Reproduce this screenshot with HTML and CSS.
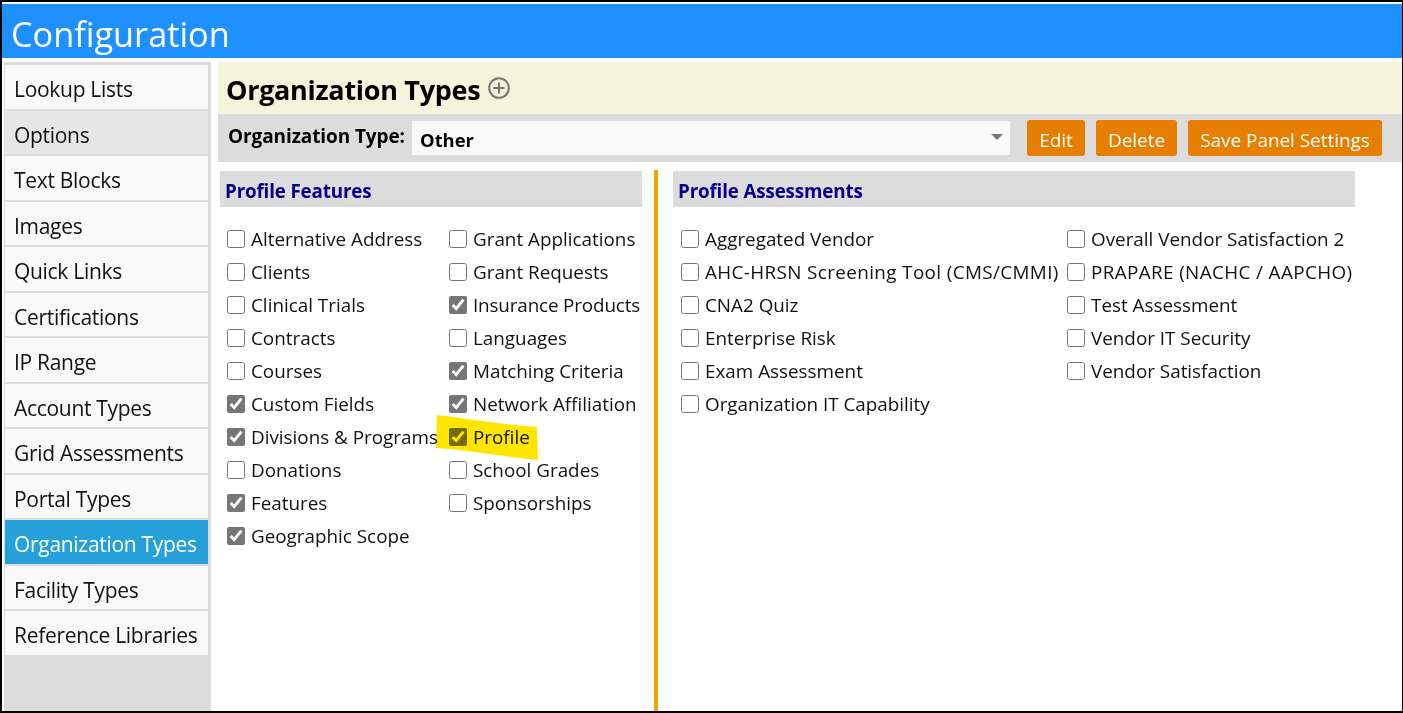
FILE: index.html
```html
<!DOCTYPE html>
<html lang="en">

<head>
  <meta charset="UTF-8" />
  <title>Configuration</title>
  <link rel="stylesheet" href="styles.css">
</head>

<body>
  <div class="frame">
    <div class="page-title">Configuration</div>

    <div class="content">
      <div class="sidebar">
        <a class="nav-item">Lookup Lists</a>
        <a class="nav-item nav-hover">Options</a>
        <a class="nav-item">Text Blocks</a>
        <a class="nav-item">Images</a>
        <a class="nav-item">Quick Links</a>
        <a class="nav-item">Certifications</a>
        <a class="nav-item">IP Range</a>
        <a class="nav-item">Account Types</a>
        <a class="nav-item">Grid Assessments</a>
        <a class="nav-item">Portal Types</a>
        <a class="nav-item nav-active">Organization Types</a>
        <a class="nav-item">Facility Types</a>
        <a class="nav-item">Reference Libraries</a>
      </div>

      <div class="main">
        <div class="title-bar">
          <h1>Organization Types</h1>
          <svg class="add-icon" viewBox="0 0 22 22" width="22" height="22">
            <circle cx="11" cy="11" r="9.8" fill="none" stroke="#777" stroke-width="2" />
            <path d="M11 5.5v11M5.5 11h11" fill="none" stroke="#777" stroke-width="2" />
          </svg>
        </div>

        <div class="toolbar">
          <label class="type-label">Organization Type:</label>
          <div class="type-select">
            <span>Other</span>
            <i class="caret"></i>
          </div>
          <button class="btn btn-edit">Edit</button>
          <button class="btn btn-delete">Delete</button>
          <button class="btn btn-save">Save Panel Settings</button>
        </div>

        <div class="panels">
          <div class="panel panel-features">
            <h2>Profile Features</h2>
            <div class="checks checks-features">
              <label class="check"><input type="checkbox">Alternative Address</label>
              <label class="check"><input type="checkbox">Clients</label>
              <label class="check"><input type="checkbox">Clinical Trials</label>
              <label class="check"><input type="checkbox">Contracts</label>
              <label class="check"><input type="checkbox">Courses</label>
              <label class="check"><input type="checkbox" checked>Custom Fields</label>
              <label class="check"><input type="checkbox" checked>Divisions &amp; Programs</label>
              <label class="check"><input type="checkbox">Donations</label>
              <label class="check"><input type="checkbox" checked>Features</label>
              <label class="check"><input type="checkbox" checked>Geographic Scope</label>
              <label class="check"><input type="checkbox">Grant Applications</label>
              <label class="check"><input type="checkbox">Grant Requests</label>
              <label class="check check-tight"><input type="checkbox" checked>Insurance Products</label>
              <label class="check"><input type="checkbox">Languages</label>
              <label class="check"><input type="checkbox" checked>Matching Criteria</label>
              <label class="check"><input type="checkbox" checked>Network Affiliation</label>
              <label class="check check-marked"><input type="checkbox" checked>Profile
                <svg class="marker" viewBox="0 0 104 46" width="104" height="46" preserveAspectRatio="none">
                  <path d="M2 1C30 4 60 10 102 13L103 46C70 43 35 36 1 34Z" fill="#ffe600" />
                </svg>
              </label>
              <label class="check"><input type="checkbox">School Grades</label>
              <label class="check"><input type="checkbox">Sponsorships</label>
            </div>
          </div>

          <div class="panel panel-assessments">
            <h2>Profile Assessments</h2>
            <div class="checks checks-assessments">
              <label class="check"><input type="checkbox">Aggregated Vendor</label>
              <label class="check check-wide"><input type="checkbox">AHC-HRSN Screening Tool (CMS/CMMI)</label>
              <label class="check"><input type="checkbox">CNA2 Quiz</label>
              <label class="check"><input type="checkbox">Enterprise Risk</label>
              <label class="check"><input type="checkbox">Exam Assessment</label>
              <label class="check"><input type="checkbox">Organization IT Capability</label>
              <label class="check"><input type="checkbox">Overall Vendor Satisfaction 2</label>
              <label class="check check-wide"><input type="checkbox">PRAPARE (NACHC / AAPCHO)</label>
              <label class="check"><input type="checkbox">Test Assessment</label>
              <label class="check"><input type="checkbox">Vendor IT Security</label>
              <label class="check"><input type="checkbox">Vendor Satisfaction</label>
            </div>
          </div>
        </div>
      </div>
    </div>
  </div>
</body>

</html>
```

FILE: styles.css
```css
html,
body {
  margin: 0;
  height: 100%;
  overflow: hidden;
}

body {
  font-family: "Open Sans", "Noto Sans", sans-serif;
  color: #111;
  background: #fff;
}

.frame {
  box-sizing: border-box;
  height: 713px;
  display: flex;
  flex-direction: column;
  border: 2px solid #000;
  border-right-width: 1px;
  padding-top: 2px;
}

.page-title {
  height: 54px;
  flex: none;
  box-sizing: border-box;
  padding: 8px 0 0 9px;
  background: #1e90ff;
  color: #fff;
  font-size: 34.3px;
  line-height: 44px;
}

.content {
  flex: 1;
  display: flex;
  min-height: 0;
  padding-top: 4px;
}

.sidebar {
  width: 207px;
  margin-left: 2px;
  box-sizing: border-box;
  padding: 3px 3px 0 1px;
  background: #dcdcdc;
  flex: none;
}

.nav-item {
  display: block;
  box-sizing: border-box;
  height: 43.5px;
  margin-bottom: 2px;
  padding-left: 9px;
  background: #f9f9f9;
  font-size: 21px;
  line-height: 49px;
  letter-spacing: -0.3px;
}

.nav-hover {
  background: #e6e6e6;
}

.nav-active {
  background: #26a0da;
  color: #fff;
}

.main {
  flex: 1;
  min-width: 0;
  margin-left: 7px;
}

.title-bar {
  height: 52px;
  display: flex;
  align-items: center;
  background: #f4f4dc;
  padding-left: 8px;
}

.title-bar h1 {
  margin: 2px 0 0;
  font-size: 27px;
  font-weight: 700;
  color: #000;
  letter-spacing: -0.3px;
}

.add-icon {
  margin: 0 0 1px 8px;
}

.toolbar {
  height: 48px;
  display: flex;
  align-items: center;
  background: #dcdcdc;
  padding-left: 10px;
}

.type-label {
  width: 184px;
  font-size: 19px;
  font-weight: 700;
  color: #000;
  letter-spacing: -0.1px;
  margin-top: -4px;
}

.type-select {
  width: 598px;
  height: 34px;
  display: flex;
  align-items: center;
  justify-content: space-between;
  box-sizing: border-box;
  padding: 0 7px 0 8px;
  background: #f9f9f9;
  font-size: 18.4px;
  font-weight: 700;
  color: #000;
}

.type-select span {
  margin-top: 3px;
}

.caret {
  border-left: 6px solid transparent;
  border-right: 6px solid transparent;
  border-top: 6px solid #777;
  margin-bottom: 3px;
}

.btn {
  height: 36px;
  padding: 3px 0 0;
  border: 0;
  border-radius: 3px;
  background: #e67e00;
  color: #fff;
  font-family: inherit;
  font-size: 19px;
  letter-spacing: -0.05px;
}

.btn-edit {
  width: 58px;
  margin-left: 17px;
}

.btn-delete {
  width: 81px;
  margin-left: 11px;
}

.btn-save {
  width: 194px;
  margin-left: 11px;
}

.panels {
  display: flex;
}

.panel {
  height: 541px;
  box-sizing: border-box;
  padding-top: 9px;
}

.panel h2 {
  margin: 0;
  height: 36px;
  box-sizing: border-box;
  padding-left: 5px;
  background: #dcdcdc;
  color: #00008b;
  font-size: 18.8px;
  font-weight: 700;
  line-height: 40px;
  letter-spacing: -0.15px;
}

.panel-features {
  width: 440px;
  padding-left: 2px;
  padding-right: 12px;
  box-sizing: border-box;
  margin-top: 8px;
  padding-top: 1px;
  border-right: 4px solid #f5a300;
}

.panel-assessments {
  width: 682px;
  margin-left: 15px;
}

.checks {
  display: grid;
  grid-auto-flow: column;
  grid-template-rows: repeat(10, 33px);
  margin-top: 15px;
}

.checks-features {
  grid-template-columns: 222px auto;
  margin-left: 7px;
}

.checks-assessments {
  grid-template-columns: 386px auto;
  grid-template-rows: repeat(6, 33px);
  margin-left: 8px;
}

.check {
  position: relative;
  display: flex;
  align-items: center;
  font-size: 18.85px;
  white-space: nowrap;
}

.check-wide {
  letter-spacing: 0.38px;
}

.check-tight {
  letter-spacing: -0.15px;
}

.check input {
  width: 18px;
  height: 18px;
  margin: 0 6px 0 0;
  accent-color: #767676;
}

.marker {
  position: absolute;
  left: -14px;
  top: -6px;
  mix-blend-mode: multiply;
}
```
